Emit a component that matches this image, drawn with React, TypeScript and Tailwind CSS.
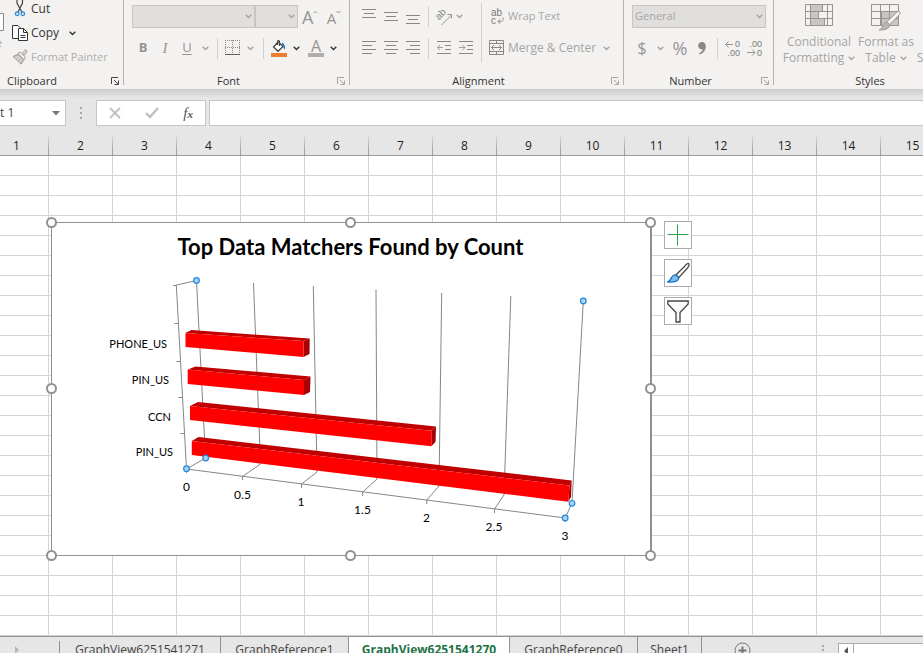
import React from "react";

const columns = Array.from({ length: 15 }, (_, i) => i + 1);
const rows = Array.from({ length: 24 }, (_, i) => i + 1);

function Chevron({ dark = false }: { dark?: boolean }) {
  return (
    <svg width="7" height="5" viewBox="0 0 7 5" fill="none" stroke={dark ? "#333333" : "#a6a5a4"} strokeWidth="1.4" aria-hidden="true">
      <path d="M0.7 0.8 3.5 3.6 6.3 0.8" />
    </svg>
  );
}

function MenuButton({ label, dark, className }: { label: string; dark?: boolean; className: string }) {
  return (
    <button type="button" aria-label={label} className={`flex h-full shrink-0 items-center justify-center ${className}`}>
      <Chevron dark={dark} />
    </button>
  );
}

function Tool({ label, className = "", children }: { label: string; className?: string; children: React.ReactNode }) {
  return (
    <button type="button" aria-label={label} className={`flex h-full shrink-0 items-center justify-center text-[#979593] ${className}`}>
      {children}
    </button>
  );
}

function Lines({ widths, y }: { widths: [number, number][]; y: number }) {
  return (
    <svg width="14" height="22" viewBox="0 0 14 22" stroke="#8a8886" strokeWidth="1" aria-hidden="true">
      {widths.map(([a, b], i) => (
        <path key={i} d={`M${a} ${y + i * 4 + 0.5}H${b}`} />
      ))}
    </svg>
  );
}

function Separator({ className = "" }: { className?: string }) {
  return <div className={`h-[21px] w-px shrink-0 bg-[#d2d0ce] ${className}`} />;
}

function GroupLabel({ text, dark, left, launcher = true }: { text: string; dark?: boolean; left?: boolean; launcher?: boolean }) {
  return (
    <div className="flex h-4 items-center text-[11px] leading-4 text-[#333333]">
      <span className={left ? "flex-1 pl-[7px]" : "flex-1 text-center"}>{text}</span>
      {launcher && (
        <button type="button" aria-label={`${text} settings`} className="flex w-4 justify-end pr-[3px]">
          <svg width="10" height="10" viewBox="0 0 10 10" fill="none" stroke={dark ? "#444444" : "#a6a5a4"} aria-hidden="true">
            <path d="M1.5 8V1.5H8M4 4l4 4M8.5 4.5v4h-4" />
          </svg>
        </button>
      )}
    </div>
  );
}

function Divider() {
  return <div className="h-[85px] w-px shrink-0 bg-[#b3b0ad]" />;
}

function Combo({ label, value, className }: { label: string; value: string; className: string }) {
  return (
    <div className={`grid h-full shrink-0 items-center ${className}`}>
      <select
        aria-label={label}
        disabled
        className="col-start-1 row-start-1 h-full w-full appearance-none border border-[#c8c6c4] bg-[#e1dfdd] pl-[2px] text-[11px] text-[#a6a5a4] opacity-100"
      >
        <option>{value}</option>
      </select>
      <span className="pointer-events-none col-start-1 row-start-1 justify-self-end pr-[3px]">
        <Chevron />
      </span>
    </div>
  );
}

function Clipboard() {
  return (
    <section className="w-[123px] shrink-0">
      <div className="flex h-[73px]">
        <div className="w-3 shrink-0 overflow-hidden pt-[13px]">
          <svg width="4" height="18" viewBox="0 0 4 18" fill="#ffffff" stroke="#8a8886" aria-hidden="true">
            <path d="M-4 0.5H3.5V17.5H-4" />
          </svg>
          <span className="-ml-1 block text-[11px] leading-6 text-[#a6a5a4]">e</span>
        </div>
        <div className="flex flex-col items-start text-[12px] text-[#333333]">
          <button type="button" className="flex h-5 items-center gap-[3px] leading-4">
            <svg width="16" height="20" viewBox="0 0 16 20" fill="none" aria-hidden="true">
              <path d="M5 0v3L9.800 12M10.500 0v3L6 12" stroke="#444444" strokeWidth="1.2" />
              <circle cx="5.200" cy="13.800" r="1.800" stroke="#2e8fd6" strokeWidth="1.300" />
              <circle cx="10.800" cy="13.800" r="1.800" stroke="#2e8fd6" strokeWidth="1.300" />
            </svg>
            <span className="-mt-[2px]">Cut</span>
          </button>
          <div className="flex h-[26px] items-center">
            <button type="button" className="flex h-full items-center gap-[3px] leading-4">
              <svg width="16" height="18" viewBox="0 0 16 18" fill="#ffffff" stroke="#333333" aria-hidden="true">
                <path d="M6 14.5H0.5V1.5H6L8 3.5V5" />
                <path d="M6.5 4.5H11.5L15.5 8.5V16.5H6.5ZM11.5 4.5V8.5H15.5M8.5 11.5h5M8.5 13.5h5" />
              </svg>
              <span>Copy</span>
            </button>
            <MenuButton label="Copy options" dark className="ml-[4px] w-[18px]" />
          </div>
          <button type="button" className="flex h-[22px] items-center gap-[3px] text-[11px] leading-4 text-[#b0aeac]">
            <svg width="16" height="16" viewBox="0 0 16 16" fill="none" stroke="#a19f9d" aria-hidden="true">
              <path d="M1 7.500 6.500 5 12 10.500 9 15.200Z" fill="#bebbb8" />
              <path d="M3 9 6.500 7.500M5 11 8.500 8.700M7 13.200 10 10.500" stroke="#f3f2f1" />
              <path d="M6 4.500 8 3 13.500 8.200 11.800 10.500Z" fill="#f3f2f1" />
              <path d="M10 4.500 13.500 .800 15.300 2.500 12 6.500Z" fill="#d6d4d2" />
            </svg>
            <span>Format Painter</span>
          </button>
        </div>
      </div>
      <GroupLabel text="Clipboard" dark left />
    </section>
  );
}

function FontGroup() {
  return (
    <section className="w-[225px] shrink-0">
      <div className="h-[73px] pt-[5px] pl-2">
        <div className="flex h-[23px]">
          <Combo label="Font name" value="" className="w-[123px]" />
          <Combo label="Font size" value="" className="w-[43px]" />
          <Tool label="Increase font size" className="ml-1 w-4">
            <span className="text-[18px] leading-5">A</span>
            <svg width="5" height="16" viewBox="0 0 5 16" fill="none" stroke="#979593" aria-hidden="true"><path d="M.5 4 2.5 2 4.5 4" /></svg>
          </Tool>
          <Tool label="Decrease font size" className="ml-2 w-4">
            <span className="pt-[2px] text-[15px] leading-5">A</span>
            <svg width="5" height="16" viewBox="0 0 5 16" fill="none" stroke="#979593" aria-hidden="true"><path d="M.5 2 2.5 4 4.5 2" /></svg>
          </Tool>
        </div>
        <div className="mt-[9px] flex h-[22px] items-center text-[13px]">
          <Tool label="Bold" className="w-[22px]"><b>B</b></Tool>
          <Tool label="Italic" className="w-[22px]"><i className="font-['Liberation_Serif',serif] text-[15px]">I</i></Tool>
          <Tool label="Underline" className="w-[22px]"><u className="underline-offset-2">U</u></Tool>
          <MenuButton label="Underline options" className="w-[14px]" />
          <Separator className="ml-[5px]" />
          <Tool label="Borders" className="ml-[7px] w-4">
            <svg width="16" height="16" viewBox="0 0 16 16" fill="none" stroke="#8a8886" aria-hidden="true">
              <path d="M0 .5H15M.5 0V14M14.5 0V14M7.5 0V14M0 7.5H15" strokeDasharray="1 1" />
              <path d="M0 14.5H15" stroke="#605e5c" />
            </svg>
          </Tool>
          <MenuButton label="Border options" className="w-[18px]" />
          <Separator className="ml-1" />
          <Tool label="Fill color" className="ml-[7px] w-4">
            <svg width="16" height="18" viewBox="0 0 16 18" fill="none" aria-hidden="true">
              <path d="M7 3 2.5 8 7 12.3 12 7.5 7.3 3M8.5 7V3Q8.5 1 6.8 1.8L6.5 6" fill="#ffffff" stroke="#444444" strokeWidth="1.2" />
              <path d="M10.5 3.5Q14.5 4 14 11L12 7.8Z" fill="#1f74bd" />
              <path d="M0 14H16V18H0Z" fill="#ed7d31" />
            </svg>
          </Tool>
          <MenuButton label="Fill color options" dark className="w-[18px]" />
          <Tool label="Font color" className="ml-[3px] w-4 flex-col">
            <span className="text-[16px] leading-[14px]">A</span>
            <span className="h-1 w-4 bg-[#b0aeac]" />
          </Tool>
          <MenuButton label="Font color options" dark className="w-[18px]" />
        </div>
      </div>
      <GroupLabel text="Font" />
    </section>
  );
}

function Indent({ right }: { right?: boolean }) {
  return (
    <svg width="14" height="14" viewBox="0 0 14 14" fill="none" stroke="#8a8886" aria-hidden="true">
      <path d="M0 .5H14M8 4.5H14M8 8.5H14M0 12.5H14" />
      <path d={right ? "M0 6.5H6M3.5 4 6 6.5 3.5 9" : "M6 6.5H.5M3 4 .5 6.5 3 9"} stroke="#a19f9d" />
    </svg>
  );
}

function Alignment() {
  return (
    <section className="w-[273px] shrink-0">
      <div className="flex h-[73px]">
        <div className="w-[131px] shrink-0 pt-[5px] pl-3">
          <div className="flex h-[23px] items-center">
            <div className="flex gap-2">
              <Tool label="Top align"><Lines widths={[[0, 14], [2, 12], [0, 14]]} y={3} /></Tool>
              <Tool label="Middle align"><Lines widths={[[0, 14], [2, 12], [0, 14]]} y={6} /></Tool>
              <Tool label="Bottom align"><Lines widths={[[0, 14], [2, 12], [0, 14]]} y={9} /></Tool>
            </div>
            <Separator className="ml-2" />
            <Tool label="Orientation" className="ml-[7px] w-4">
              <svg width="16" height="18" viewBox="0 0 16 18" fill="none" stroke="#979593" aria-hidden="true" className="font-['Liberation_Sans',sans-serif]">
                <text x="1" y="10" fontSize="10" fill="#8a8886" stroke="none" transform="rotate(-45 5 9)">ab</text>
                <path d="M5.500 17 15.500 7M11.500 6.500H15.500V10.500" />
              </svg>
            </Tool>
            <MenuButton label="Orientation options" className="w-[14px]" />
          </div>
          <div className="mt-[9px] flex h-[22px] items-center">
            <div className="flex gap-2">
              <Tool label="Align left"><Lines widths={[[0, 14], [0, 10], [0, 14], [0, 10]]} y={4} /></Tool>
              <Tool label="Center"><Lines widths={[[0, 14], [2, 12], [0, 14], [2, 12]]} y={4} /></Tool>
              <Tool label="Align right"><Lines widths={[[0, 14], [4, 14], [0, 14], [4, 14]]} y={4} /></Tool>
            </div>
            <Separator className="ml-2" />
            <Tool label="Decrease indent" className="ml-2"><Indent /></Tool>
            <Tool label="Increase indent" className="ml-2"><Indent right /></Tool>
          </div>
        </div>
        <div className="mt-[3px] h-[59px] w-px shrink-0 bg-[#d2d0ce]" />
        <div className="pt-[5px] pl-[7px] text-[12px] text-[#a6a5a4]">
          <button type="button" className="flex h-[23px] items-center gap-[3px]">
            <svg width="16" height="22" viewBox="0 0 16 22" fill="none" stroke="#979593" aria-hidden="true" className="font-['Liberation_Sans',sans-serif]">
              <text x="2" y="10" fontSize="10" fill="#7a7876" stroke="none">ab</text>
              <text x="2" y="18" fontSize="10" fill="#7a7876" stroke="none">c</text>
              <path d="M14 11.500Q16 16 9 15.500M11.500 13 8.700 15.500 11.500 18" />
            </svg>
            <span className="text-[11px]">Wrap Text</span>
          </button>
          <div className="mt-[9px] flex h-[22px] items-center">
            <button type="button" className="flex h-full items-center gap-[3px]">
              <svg width="16" height="16" viewBox="0 0 16 16" fill="none" stroke="#8a8886" aria-hidden="true">
                <path d="M.5.5H14.5V14.5H.5ZM0 3.5H15M0 11.5H15M7.5.5V3.5M7.5 11.5V14.5M2.5 7.5H12.5M5 5 2.5 7.5 5 10M10 5 12.5 7.5 10 10" />
              </svg>
              <span>Merge &amp; Center</span>
            </button>
            <MenuButton label="Merge options" className="ml-px w-[18px]" />
          </div>
        </div>
      </div>
      <GroupLabel text="Alignment" />
    </section>
  );
}

function DecimalIcon({ increase }: { increase?: boolean }) {
  return (
    <svg width="16" height="20" viewBox="0 0 16 20" fill="none" stroke="#979593" aria-hidden="true" className="font-['Liberation_Sans',sans-serif]">
      <text x="15" y="9" fontSize="9" textAnchor="end" fill="#7a7876" stroke="none">{increase ? "0" : ".00"}</text>
      <text x="15" y="18" fontSize="9" textAnchor="end" fill="#7a7876" stroke="none">{increase ? ".00" : "0"}</text>
      <path d={increase ? "M8 6.500H.700M3.500 3.500 .700 6.500 3.500 9.500" : "M0 14.500H8M5.200 11.500 8 14.500 5.200 17.500"} />
    </svg>
  );
}

function NumberGroup() {
  return (
    <section className="w-[149px] shrink-0">
      <div className="h-[73px] pt-[5px] pl-2">
        <div className="flex h-[23px]">
          <Combo label="Number format" value="General" className="w-[134px]" />
        </div>
        <div className="mt-[9px] flex h-[22px] items-center">
          <Tool label="Accounting format" className="w-5"><span className="text-[16px]">$</span></Tool>
          <MenuButton label="Accounting options" className="w-4" />
          <Tool label="Percent style" className="w-6"><span className="text-[18px]">%</span></Tool>
          <Tool label="Comma style" className="w-5">
            <svg width="8" height="13" viewBox="0 0 8 13" fill="#8a8886" aria-hidden="true">
              <path d="M4 0C6.3 0 7.8 1.7 7.8 4.3 7.8 8 5.5 11.500 1.500 12.500L1 11.500C3.300 10.500 4.500 9 4.800 7.300 2.300 8 .2 6.200.2 3.800.2 1.600 1.800 0 4 0Z" />
            </svg>
          </Tool>
          <Separator className="ml-[5px]" />
          <Tool label="Increase decimal" className="ml-[7px] w-4"><DecimalIcon increase /></Tool>
          <Tool label="Decrease decimal" className="ml-[6px] w-4"><DecimalIcon /></Tool>
        </div>
      </div>
      <GroupLabel text="Number" />
    </section>
  );
}

function Styles() {
  return (
    <section className="w-[192px] shrink-0">
      <div className="flex h-[73px] items-start pt-[3px] pl-[11px] text-[12px] leading-4 text-[#a6a5a4]">
        <button type="button" className="flex w-[68px] shrink-0 flex-col items-center whitespace-nowrap">
          <svg width="28" height="24" viewBox="0 0 28 24" fill="none" stroke="#979593" aria-hidden="true">
            <path d="M5.500 1.500H17.500V8.500H13.500V15.500H19.500V22.500H5.500Z" fill="#c8c6c4" />
            <path d="M.5 1.500H27.500V22.500H.5ZM.5 8.500H27.500M.5 15.500H27.500M5.500 1V22M22.500 1V22M13.500 9V15" />
          </svg>
          <span className="mt-[7px]">Conditional</span>
          <span className="flex items-center gap-1">Formatting <Chevron /></span>
        </button>
        <button type="button" className="ml-[6px] flex w-[54px] shrink-0 flex-col items-center whitespace-nowrap">
          <svg width="30" height="28" viewBox="0 0 30 28" fill="none" stroke="#979593" aria-hidden="true">
            <path d="M10.500 8.500H27.500V22.500H10.500Z" fill="#c8c6c4" />
            <path d="M.5 1.500H27.500V22.500H.5ZM.5 8.500H27.500M.5 15.500H27.500M9.500 1V22M18.500 1V22" />
            <path d="M28.500 8.500Q30 9.500 28.500 11.500L19 21.500 15.500 19 25.500 9.500Q27.500 7.500 28.500 8.500Z" fill="#f3f2f1" />
            <path d="M15.500 19 19 22Q18 27.500 8 27Q11.500 25.500 12 22Q13 19 15.500 19Z" fill="#b8b6b4" stroke="#a19f9d" />
          </svg>
          <span className="mt-[3px]">Format as</span>
          <span className="flex items-center gap-1">Table <Chevron /></span>
        </button>
        <button type="button" className="mt-[31px] ml-[3px] flex w-[34px] shrink-0 flex-col items-center">
          <span>Cell</span>
          <span>Styles</span>
        </button>
      </div>
      <GroupLabel text="Styles" launcher={false} />
    </section>
  );
}

function FormulaBar() {
  return (
    <div className="shrink-0 bg-[linear-gradient(#cccccc,#e6e6e6_9px)] pt-[11px] pb-[11px]">
      <div className="flex h-[26px] items-stretch">
        <div className="flex w-[66px] shrink-0 items-center border border-l-0 border-[#c6c6c6] bg-white">
          <input aria-label="Name box" defaultValue="t 1" className="w-12 flex-1 bg-transparent text-[12px] text-[#444444] outline-none" />
          <button type="button" aria-label="Name list" className="w-5 shrink-0 pl-1">
            <svg width="8" height="5" viewBox="0 0 8 5" fill="#777777" aria-hidden="true"><path d="M0 0H8L4 4.500Z" /></svg>
          </button>
        </div>
        <svg className="mx-[13px] shrink-0 self-center" width="4" height="12" viewBox="0 0 4 12" fill="#a6a6a6" aria-hidden="true">
          <path d="M1 0h2v2H1zM1 5h2v2H1zM1 10h2v2H1z" />
        </svg>
        <div className="flex w-[110px] shrink-0 items-center justify-between border border-[#c6c6c6] bg-white px-3">
          <button type="button" aria-label="Cancel">
            <svg width="12" height="12" viewBox="0 0 12 12" stroke="#c0c0c0" strokeWidth="1.800" aria-hidden="true"><path d="M1 1 11 11M11 1 1 11" /></svg>
          </button>
          <button type="button" aria-label="Enter">
            <svg width="14" height="12" viewBox="0 0 14 12" fill="none" stroke="#c0c0c0" strokeWidth="2.400" aria-hidden="true"><path d="M1 6 5 10 13 1" /></svg>
          </button>
          <button type="button" aria-label="Insert function" className="font-['Liberation_Serif',serif] text-[15px] leading-5 text-[#555555] italic">
            f<b className="text-[11px]">x</b>
          </button>
        </div>
        <input aria-label="Formula" className="ml-[3px] min-w-0 flex-1 border border-r-0 border-[#c6c6c6] bg-white px-2 text-[12px] outline-none" />
      </div>
    </div>
  );
}

type Bar = { name: string; x: number; y: number; front: string; top: string; side: string };

const bars: Bar[] = [
  { name: "PHONE_US", x: 167, y: 348, front: "185.5,333 303.5,341 303.5,357 185.5,347", top: "185.5,333 191.5,330 309.7,338.5 303.5,341", side: "303.5,341 309.7,338.5 309.5,354 303.5,357" },
  { name: "PIN_US", x: 169, y: 384, front: "187.7,369.5 304,380 304,395 187.7,384", top: "187.7,369.5 195.5,366.5 310.5,376.5 304,380", side: "304,380 310.5,376.5 310,392 304,395" },
  { name: "CCN", x: 171, y: 421, front: "190,406 431.3,430.7 431.3,446.3 190,420", top: "190,406 198,402 436,426.5 431.3,430.7", side: "431.3,430.7 436,426.5 435.5,442 431.3,446.3" },
  { name: "PIN_US", x: 173, y: 456, front: "191.8,441 569.5,485.5 568.3,501.7 191.8,455", top: "191.8,441 198.5,437 571.7,480.5 569.5,485.5", side: "569.5,485.5 571.7,480.5 571,497 568.3,501.7" },
];

const ticks = [
  { text: "0", x: 186.5, y: 491 },
  { text: "0.5", x: 242.5, y: 499 },
  { text: "1", x: 301, y: 506 },
  { text: "1.5", x: 362.5, y: 514 },
  { text: "2", x: 426.5, y: 522 },
  { text: "2.5", x: 494, y: 531 },
  { text: "3", x: 565, y: 540 },
];

const handles = [[51.5, 222.5], [350.5, 222.5], [650.5, 222.5], [51.5, 388.5], [650.5, 388.5], [51.5, 555.5], [350.5, 555.5], [650.5, 555.5]];
const points = [[196.5, 280.5], [583.3, 301], [205.7, 458], [186.5, 468.7], [572, 503.3], [565.2, 518]];

function Chart() {
  return (
    <svg
      role="img"
      aria-label="Top Data Matchers Found by Count"
      width="610"
      height="344"
      viewBox="46 217 610 344"
      className="block font-['Lato',sans-serif]"
    >
      <rect x="51.5" y="222.5" width="599" height="333" fill="#ffffff" stroke="#919191" />
      <path d="M651 223V555" stroke="#919191" strokeWidth="2" />
      <text x="350.5" y="255" fontSize="22" fontWeight="700" textAnchor="middle">Top Data Matchers Found by Count</text>
      <g fill="none" stroke="#868686" strokeWidth="1">
        <path d="M196.500 280.500 176.300 285 186.500 469 565.300 518 572 503 583.300 301" />
        <path d="M196.500 281 205.500 458 186.500 469" />
        <path d="M253.500 283 260.500 464 242.500 476.500V480" />
        <path d="M313.300 286 317 472 301.500 484V488" />
        <path d="M376 289.500 377 479 362.700 492V496" />
        <path d="M441.700 293 439 486 426.800 500V504" />
        <path d="M510.800 296 504 495 494.500 509V513" />
        <path d="M173 285.500H177M174.500 323.500H178.500M176.500 361.500H180.500M178.500 397.500H182.500M180.500 433.500H184.500M183 468.500H187M186.500 469V473M565.300 518V522" />
      </g>
      {bars.map((bar) => (
        <g key={bar.y}>
          <polygon points={bar.top} fill="#c00000" />
          <polygon points={bar.side} fill="#a80000" />
          <polygon points={bar.front} fill="#ff0000" />
          <text x={bar.x} y={bar.y} fontSize="11" textAnchor="end">{bar.name}</text>
        </g>
      ))}
      {ticks.map((tick) => (
        <text key={tick.text} x={tick.x} y={tick.y} fontSize="12" textAnchor="middle">{tick.text}</text>
      ))}
      {points.map(([cx, cy]) => (
        <circle key={cx} cx={cx} cy={cy} r="2.800" fill="#a9d3f5" stroke="#1f87dc" strokeWidth="1.200" />
      ))}
      {handles.map(([cx, cy]) => (
        <circle key={`${cx}-${cy}`} cx={cx} cy={cy} r="4.500" fill="#ffffff" stroke="#919191" strokeWidth="2" />
      ))}
    </svg>
  );
}

function ChartButtons() {
  const box = "flex h-7 w-7 items-center justify-center border border-[#ababab] bg-white";
  return (
    <div className="mt-1 ml-2 flex flex-col gap-[10px]">
      <button type="button" aria-label="Chart elements" className={box}>
        <svg width="22" height="22" viewBox="0 0 22 22" stroke="#2e9e4f" aria-hidden="true"><path d="M.5 10.500H21.500M10.500.5V21.500" /></svg>
      </button>
      <button type="button" aria-label="Chart styles" className={box}>
        <svg width="24" height="22" viewBox="0 0 24 22" fill="none" aria-hidden="true">
          <path d="M22.500 1.500Q24 3 21.500 6L13 15.500 9.800 13 18.500 4.500Q21.500 1 22.500 1.500Z" fill="#ffffff" stroke="#444444" strokeWidth="1.200" />
          <path d="M9.800 13 12.800 15.500Q12.500 21 1 20Q4.500 19 5.500 15.500Q7 12.500 9.800 13Z" fill="#7dbcf0" stroke="#1873c4" strokeWidth="1.200" />
        </svg>
      </button>
      <button type="button" aria-label="Chart filters" className={box}>
        <svg width="22" height="23" viewBox="0 0 22 23" fill="#fafafa" stroke="#444444" strokeWidth="1.300" aria-hidden="true">
          <path d="M.8 1H21.200V4L13 12.500V22H9V12.500L.8 4Z" />
        </svg>
      </button>
    </div>
  );
}

function Sheet() {
  return (
    <main className="relative min-h-0 flex-1 overflow-hidden bg-white">
      <table className="-ml-[15px] w-[960px] table-fixed border-separate border-spacing-0 text-[12px] leading-4">
        <thead>
          <tr>
            {columns.map((c) => (
              <th key={c} scope="col" className="h-[19px] border-b border-[#999999] bg-[#e6e6e6] bg-[linear-gradient(#cfcfcf,#999999)] bg-[length:1px_100%] bg-right bg-no-repeat p-0 pr-px font-normal text-[#222222]">
                {c}
              </th>
            ))}
          </tr>
        </thead>
        <tbody>
          {rows.map((r) => (
            <tr key={r}>
              {columns.map((c) => (
                <td key={c} className="h-5 border-r border-b border-[#d4d4d4] p-0" />
              ))}
            </tr>
          ))}
        </tbody>
      </table>
      <div className="absolute top-20 left-[46px] flex items-start">
        <Chart />
        <ChartButtons />
      </div>
    </main>
  );
}

function SheetTabs() {
  const tab = "h-[25px] shrink-0 border-r border-[#919191] text-[#444444]";
  return (
    <footer className="flex h-[17px] shrink-0 items-start overflow-hidden border-t border-[#919191] bg-[#e6e6e6] text-[12px] leading-6">
      <button type="button" aria-label="Next sheet" className="mt-1 flex h-5 w-[60px] shrink-0 items-start border-r border-[#919191] pt-[5px] pl-[15px]">
        <svg width="4" height="8" viewBox="0 0 4 8" fill="#b5b5b5" aria-hidden="true"><path d="M0 0 4 4 0 8Z" /></svg>
      </button>
      <button type="button" className={`${tab} w-[161px]`}>GraphView6251541271</button>
      <button type="button" className={`${tab} w-[128px]`}>GraphReference1</button>
      <button type="button" className="h-[25px] w-[161px] shrink-0 border-r border-[#919191] bg-white text-[12px] font-bold text-[#217346]">GraphView6251541270</button>
      <button type="button" className={`${tab} w-[128px]`}>GraphReference0</button>
      <button type="button" className={`${tab} w-16`}>Sheet1</button>
      <button type="button" aria-label="New sheet" className="mt-[5px] ml-8 shrink-0">
        <svg width="17" height="17" viewBox="0 0 17 17" fill="none" stroke="#777777" aria-hidden="true">
          <circle cx="8.500" cy="8.500" r="7.500" />
          <path d="M4.500 8.500H12.500M8.500 4.500V12.500" strokeWidth="2" />
        </svg>
      </button>
      <div className="flex-1" />
      <svg className="mt-2 mr-[13px] shrink-0" width="3" height="10" viewBox="0 0 3 10" fill="#a6a6a6" aria-hidden="true">
        <path d="M0 0h2v2H0zM0 4h2v2H0zM0 8h2v2H0z" />
      </svg>
      <div className="mt-[6px] flex h-[18px] w-[85px] shrink-0 border border-r-0 border-[#ababab] bg-white">
        <button type="button" aria-label="Scroll left" className="flex h-full w-[15px] items-start justify-center border-r border-[#ababab] pt-[3px]">
          <svg width="4" height="8" viewBox="0 0 4 8" fill="#555555" aria-hidden="true"><path d="M4 0 0 4 4 8Z" /></svg>
        </button>
      </div>
    </footer>
  );
}

export default function App() {
  return (
    <div className="flex h-screen flex-col overflow-hidden bg-[#e6e6e6] font-['Open_Sans','Noto_Sans',sans-serif]">
      <header className="flex h-[89px] shrink-0 overflow-hidden bg-[#f3f2f1]">
        <Clipboard />
        <Divider />
        <FontGroup />
        <Divider />
        <Alignment />
        <Divider />
        <NumberGroup />
        <Divider />
        <Styles />
      </header>
      <FormulaBar />
      <Sheet />
      <SheetTabs />
    </div>
  );
}
